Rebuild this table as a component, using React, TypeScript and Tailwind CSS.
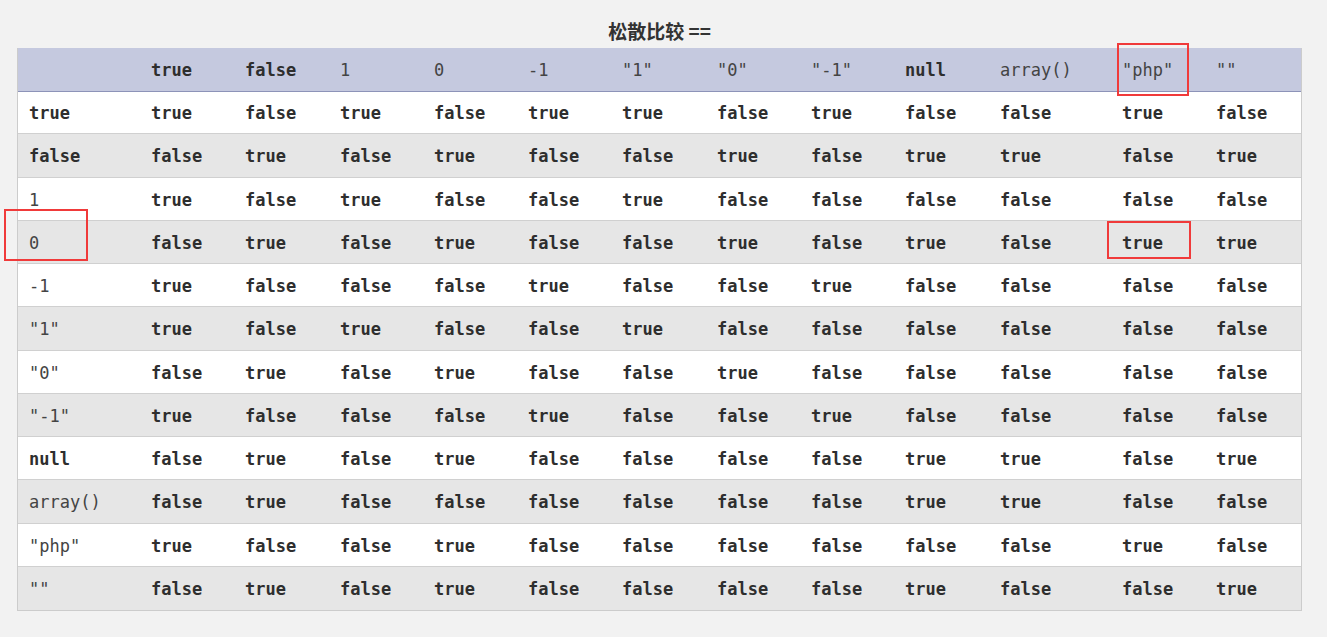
import React from "react";

type Cell = { t: string; b: boolean };

const headers: Cell[] = [
  { t: "", b: false },
  { t: "true", b: true },
  { t: "false", b: true },
  { t: "1", b: false },
  { t: "0", b: false },
  { t: "-1", b: false },
  { t: '"1"', b: false },
  { t: '"0"', b: false },
  { t: '"-1"', b: false },
  { t: "null", b: true },
  { t: "array()", b: false },
  { t: '"php"', b: false },
  { t: '""', b: false },
];

const T = true;
const F = false;

const data: boolean[][] = [
  [T, F, T, F, T, T, F, T, F, F, T, F],
  [F, T, F, T, F, F, T, F, T, T, F, T],
  [T, F, T, F, F, T, F, F, F, F, F, F],
  [F, T, F, T, F, F, T, F, T, F, T, T],
  [T, F, F, F, T, F, F, T, F, F, F, F],
  [T, F, T, F, F, T, F, F, F, F, F, F],
  [F, T, F, T, F, F, T, F, F, F, F, F],
  [T, F, F, F, T, F, F, T, F, F, F, F],
  [F, T, F, T, F, F, F, F, T, T, F, T],
  [F, T, F, F, F, F, F, F, T, T, F, F],
  [T, F, F, T, F, F, F, F, F, F, T, F],
  [F, T, F, T, F, F, F, F, T, F, F, T],
];

const rowHeights = [
  "h-[42px]",
  "h-[44px]",
  "h-[43px]",
  "h-[43px]",
  "h-[43px]",
  "h-[44px]",
  "h-[43px]",
  "h-[43px]",
  "h-[43px]",
  "h-[44px]",
  "h-[43px]",
  "h-[43px]",
];

const gridCols =
  "grid grid-cols-[122px_94px_95px_94px_94px_94px_95px_94px_94px_95px_122px_94px_1fr]";

const mono = { fontFamily: '"DejaVu Sans Mono", "Liberation Mono", monospace' };

function CellText({ c }: { c: Cell }) {
  return (
    <div
      className={`flex items-center pl-[11px] pt-[3px] whitespace-pre text-[17px] ${
        c.b ? "font-bold text-[#2e2e2e]" : "font-normal text-[#444]"
      }`}
      style={mono}
    >
      {c.t}
    </div>
  );
}

export default function App() {
  return (
    <div className="relative w-[1327px] h-[637px] bg-[#f2f2f2] overflow-hidden">
      <div
        className="h-[48px] pt-[19px] text-center text-[19px] leading-[24px] font-bold text-[#333] w-[1285px] ml-[17px]"
        style={{ fontFamily: '"Noto Sans CJK SC", "Noto Sans", sans-serif' }}
      >
        松散比较 ==
      </div>
      <div className="ml-[17px] w-[1285px] border-l border-r border-b border-[#cccccc]">
        <div className={`${gridCols} h-[44px] bg-[#c5c9df] border-b border-[#8d93b8]`}>
          {headers.map((h, i) => (
            <CellText key={i} c={h} />
          ))}
        </div>
        {data.map((row, ri) => (
          <div
            key={ri}
            className={`${gridCols} ${rowHeights[ri]} ${
              ri % 2 === 0 ? "bg-white" : "bg-[#e6e6e6]"
            } ${ri < data.length - 1 ? "border-b border-[#d0d0d0]" : ""}`}
          >
            <CellText c={headers[ri + 1]} />
            {row.map((v, ci) => (
              <CellText key={ci} c={{ t: v ? "true" : "false", b: true }} />
            ))}
          </div>
        ))}
      </div>
      <div className="absolute left-[1117px] top-[43px] w-[72px] h-[53px] border-2 border-[#f03a3a]" />
      <div className="absolute left-[4px] top-[209px] w-[84px] h-[52px] border-2 border-[#f03a3a]" />
      <div className="absolute left-[1107px] top-[221px] w-[84px] h-[38px] border-2 border-[#f03a3a]" />
    </div>
  );
}
